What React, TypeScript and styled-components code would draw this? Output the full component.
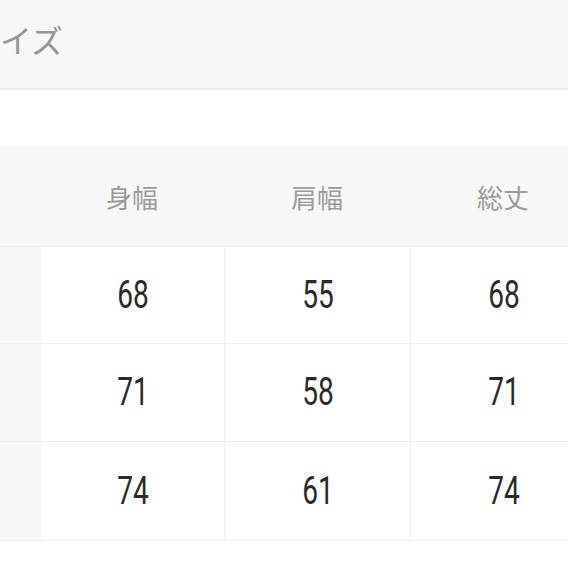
import React from "react";
import styled, { createGlobalStyle } from "styled-components";

const Global = createGlobalStyle`
  html, body { margin: 0; padding: 0; background: #ffffff; overflow: hidden; }
  body { font-family: "Noto Sans CJK JP", "Noto Sans", sans-serif; }
`;

const Page = styled.div`
  width: 568px;
  height: 568px;
  overflow: hidden;
  background: #ffffff;
  display: flex;
  flex-direction: column;
`;

const TitleBar = styled.div`
  height: 90px;
  box-sizing: border-box;
  padding-bottom: 10px;
  background: #f7f7f7;
  border-bottom: 2px solid #ededed;
  display: flex;
  align-items: center;
  flex-shrink: 0;
`;

const Title = styled.h2`
  margin: 0;
  font-family: "Noto Sans CJK JP", sans-serif;
  font-weight: 400;
  font-size: 32px;
  line-height: 1;
  color: #959595;
`;

const Spacer = styled.div`
  height: 56px;
  flex-shrink: 0;
`;

const Table = styled.div`
  display: flex;
  flex-direction: column;
  width: 800px;
`;

const cols = "40px 184px 186px 186px 186px";

const HeaderRow = styled.div`
  display: grid;
  grid-template-columns: ${cols};
  height: 100px;
  background: #f7f7f7;
  border-bottom: 1px solid #eeeeee;
`;

const HeadCell = styled.div`
  display: flex;
  align-items: center;
  justify-content: center;
  font-family: "Noto Sans CJK JP", sans-serif;
  font-size: 26px;
  color: #9b9b9b;
`;

const DataRow = styled.div<{ $h: number }>`
  display: grid;
  grid-template-columns: ${cols};
  height: ${(p) => p.$h}px;
  border-bottom: 1px solid #f0f0f0;
`;

const LabelCell = styled.div`
  background: #f7f7f7;
`;

const ValueCell = styled.div<{ $first?: boolean }>`
  background: #ffffff;
  border-left: 1px solid ${(p) => (p.$first ? "#f4f4f4" : "#efefef")};
  display: flex;
  align-items: center;
  justify-content: center;
`;

const Num = styled.span`
  display: inline-block;
  font-family: "Roboto", "Liberation Sans", sans-serif;
  font-size: 39px;
  line-height: 1;
  color: #2a2a2a;
  transform: scaleX(0.72);
`;

const heads = ["身幅", "肩幅", "総丈", ""];
const rows = [
  { h: 96, v: ["68", "55", "68"] },
  { h: 97, v: ["71", "58", "71"] },
  { h: 98, v: ["74", "61", "74"] },
];

export default function App() {
  return (
    <>
      <Global />
      <Page>
        <TitleBar>
          <Title>イズ</Title>
        </TitleBar>
        <Spacer />
        <Table>
          <HeaderRow>
            <div />
            {heads.map((h, i) => (
              <HeadCell key={i}>{h}</HeadCell>
            ))}
          </HeaderRow>
          {rows.map((r, i) => (
            <DataRow key={i} $h={r.h}>
              <LabelCell />
              {r.v.map((v, j) => (
                <ValueCell key={j} $first={j === 0}>
                  <Num>{v}</Num>
                </ValueCell>
              ))}
              <ValueCell />
            </DataRow>
          ))}
        </Table>
      </Page>
    </>
  );
}
